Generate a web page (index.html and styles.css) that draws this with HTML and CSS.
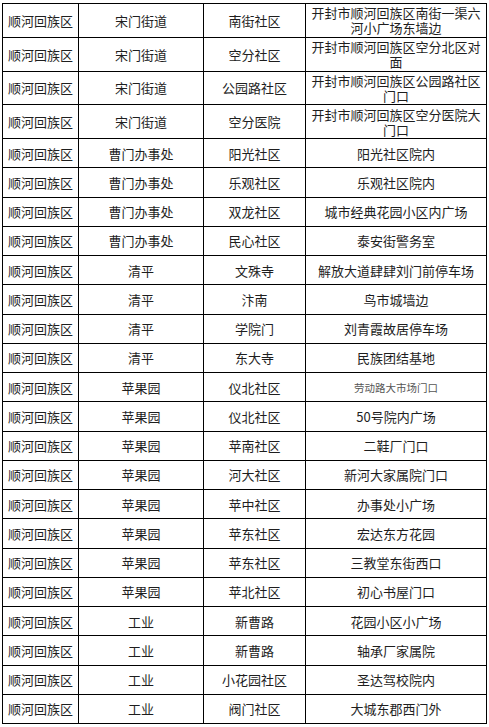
FILE: index.html
```html
<!DOCTYPE html>
<html lang="zh-CN">
<head>
<meta charset="utf-8">
<title>顺河回族区</title>
<link rel="stylesheet" href="styles.css">
</head>
<body>
<table class="sheet">
  <colgroup>
    <col class="c1"><col class="c2"><col class="c3"><col class="c4">
  </colgroup>
  <tbody>
    <tr class="tall"><td>顺河回族区</td><td>宋门街道</td><td>南街社区</td><td class="addr">开封市顺河回族区南街一渠六河小广场东墙边</td></tr>
    <tr class="tall"><td>顺河回族区</td><td>宋门街道</td><td>空分社区</td><td class="addr">开封市顺河回族区空分北区对面</td></tr>
    <tr class="tall"><td>顺河回族区</td><td>宋门街道</td><td>公园路社区</td><td class="addr">开封市顺河回族区公园路社区门口</td></tr>
    <tr class="tall"><td>顺河回族区</td><td>宋门街道</td><td>空分医院</td><td class="addr">开封市顺河回族区空分医院大门口</td></tr>
    <tr><td>顺河回族区</td><td>曹门办事处</td><td>阳光社区</td><td>阳光社区院内</td></tr>
    <tr><td>顺河回族区</td><td>曹门办事处</td><td>乐观社区</td><td>乐观社区院内</td></tr>
    <tr><td>顺河回族区</td><td>曹门办事处</td><td>双龙社区</td><td>城市经典花园小区内广场</td></tr>
    <tr><td>顺河回族区</td><td>曹门办事处</td><td>民心社区</td><td>泰安街警务室</td></tr>
    <tr><td>顺河回族区</td><td>清平</td><td>文殊寺</td><td>解放大道肆肆刘门前停车场</td></tr>
    <tr><td>顺河回族区</td><td>清平</td><td>汴南</td><td>鸟市城墙边</td></tr>
    <tr><td>顺河回族区</td><td>清平</td><td>学院门</td><td>刘青霞故居停车场</td></tr>
    <tr><td>顺河回族区</td><td>清平</td><td>东大寺</td><td>民族团结基地</td></tr>
    <tr><td>顺河回族区</td><td>苹果园</td><td>仪北社区</td><td class="small">劳动路大市场门口</td></tr>
    <tr><td>顺河回族区</td><td>苹果园</td><td>仪北社区</td><td>50号院内广场</td></tr>
    <tr><td>顺河回族区</td><td>苹果园</td><td>苹南社区</td><td>二鞋厂门口</td></tr>
    <tr><td>顺河回族区</td><td>苹果园</td><td>河大社区</td><td>新河大家属院门口</td></tr>
    <tr><td>顺河回族区</td><td>苹果园</td><td>苹中社区</td><td>办事处小广场</td></tr>
    <tr><td>顺河回族区</td><td>苹果园</td><td>苹东社区</td><td>宏达东方花园</td></tr>
    <tr><td>顺河回族区</td><td>苹果园</td><td>苹东社区</td><td>三教堂东街西口</td></tr>
    <tr><td>顺河回族区</td><td>苹果园</td><td>苹北社区</td><td>初心书屋门口</td></tr>
    <tr><td>顺河回族区</td><td>工业</td><td>新曹路</td><td>花园小区小广场</td></tr>
    <tr><td>顺河回族区</td><td>工业</td><td>新曹路</td><td>轴承厂家属院</td></tr>
    <tr><td>顺河回族区</td><td>工业</td><td>小花园社区</td><td>圣达驾校院内</td></tr>
    <tr><td>顺河回族区</td><td>工业</td><td>阀门社区</td><td>大城东郡西门外</td></tr>
  </tbody>
</table>
</body>
</html>
```
FILE: styles.css
```css
html, body {
  margin: 0;
  padding: 0;
  background: #ffffff;
}
body {
  padding: 3px 0 0 2px;
  font-family: "Noto Sans CJK SC", "Noto Sans", sans-serif;
  font-size: 13px;
  color: #1e1e1e;
}
.sheet {
  border-collapse: collapse;
  table-layout: fixed;
  width: 484px;
}
.c1 { width: 76px; }
.c2 { width: 125px; }
.c3 { width: 102px; }
.c4 { width: 181px; }
.sheet td {
  border: 1px solid #000;
  text-align: center;
  vertical-align: middle;
  padding: 0 4px;
  line-height: 15px;
  height: 28.25px;
  white-space: nowrap;
  overflow: hidden;
}
.sheet tr.tall td {
  height: 32.75px;
}
.sheet td.addr {
  white-space: normal;
  word-break: break-all;
  line-height: 15px;
}
.sheet td.small {
  font-size: 10.5px;
  color: #555;
}
```
